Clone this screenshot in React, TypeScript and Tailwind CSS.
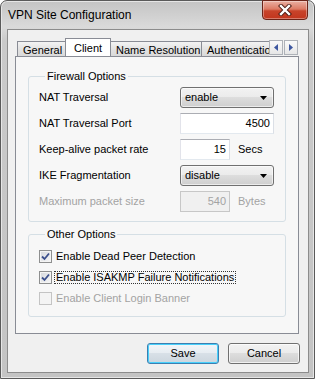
import React from 'react';

const font = "font-['Liberation_Sans',Arial,sans-serif]";

function CloseButton() {
  return (
    <div className="-mt-px mr-px flex h-[20px] w-[46px] items-center justify-center rounded-b-[4px] border border-[#6b2418] bg-[linear-gradient(180deg,#eab0a2_0%,#dc7a64_45%,#c8432a_55%,#c2351d_100%)] shadow-[inset_0_0_0_1px_rgba(255,255,255,0.35)]">
      <svg width="14" height="12" viewBox="0 0 14 12">
        <path d="M3 2 L11 10 M11 2 L3 10" stroke="#4a1a12" strokeWidth="4.2" strokeLinecap="square" />
        <path d="M3 2 L11 10 M11 2 L3 10" stroke="#ffffff" strokeWidth="2.4" strokeLinecap="square" />
      </svg>
    </div>
  );
}

function Tab({ label, width, selected }: { label: string; width: string; selected?: boolean }) {
  if (selected) {
    return (
      <div className={`relative z-10 -mb-px -ml-px flex h-[19px] shrink-0 justify-center border border-b-0 border-[#898c95] bg-white pt-[3px] text-[11px] leading-[13px] ${width}`}>
        {label}
      </div>
    );
  }
  return (
    <div className={`-ml-px flex h-[15px] shrink-0 overflow-hidden border border-b-0 border-[#898c95] bg-[linear-gradient(180deg,#f3f3f3,#e3e3e3_50%,#d9d9d9)] pl-[5px] pt-[2px] text-[11px] leading-[13px] ${width}`}>
      <span className="whitespace-nowrap">{label}</span>
    </div>
  );
}

function ScrollArrow({ dir }: { dir: 'left' | 'right' }) {
  return (
    <div className="flex h-[15px] w-[14px] items-center justify-center border border-[#aeb2b8] bg-[linear-gradient(180deg,#fafafa,#e6e6e6)]">
      <svg width="4" height="7" viewBox="0 0 4 7">
        {dir === 'left' ? <path d="M4 0 L0 3.5 L4 7 Z" fill="#3d57a0" /> : <path d="M0 0 L4 3.5 L0 7 Z" fill="#3d57a0" />}
      </svg>
    </div>
  );
}

function Select({ value }: { value: string }) {
  return (
    <div className="flex h-[21px] w-[94px] items-center justify-between rounded-[3px] border border-[#707070] bg-[linear-gradient(180deg,#f2f2f2_0%,#ebebeb_50%,#dddddd_50%,#cfcfcf_100%)] pl-[4px] pr-[6px] text-[11px] shadow-[inset_0_0_0_1px_rgba(255,255,255,0.6)]">
      <span>{value}</span>
      <svg width="7" height="4" viewBox="0 0 7 4">
        <path d="M0 0 L7 0 L3.5 4 Z" fill="#000" />
      </svg>
    </div>
  );
}

function NumberBox({ value, width, disabled }: { value: string; width: string; disabled?: boolean }) {
  return (
    <div
      className={`flex h-[21px] items-center justify-end border pr-[3px] text-[11px] ${width} ${
        disabled ? 'border-[#c7c7c7] bg-[#f0f0f0] text-[#a3a3a3]' : 'border-[#abadb3] border-b-[#e3e9ef] border-l-[#e2e3ea] border-r-[#dbdfe6] bg-white'
      }`}
    >
      {value}
    </div>
  );
}

function Row({ label, disabled, children }: { label: string; disabled?: boolean; children: React.ReactNode }) {
  return (
    <div className="flex h-[21px] items-center">
      <span className={`w-[141px] text-[11px] ${disabled ? 'text-[#a3a3a3]' : ''}`}>{label}</span>
      {children}
    </div>
  );
}

function CheckRow({ label, checked, disabled, focused }: { label: string; checked?: boolean; disabled?: boolean; focused?: boolean }) {
  return (
    <div className="flex h-[21px] items-center">
      <div
        className={`flex h-[13px] w-[13px] items-center justify-center border ${
          disabled ? 'border-[#c4c4c4] bg-[#f4f4f4]' : 'border-[#8e8f8f] bg-[linear-gradient(135deg,#d4d7dc,#f7f7f7)] shadow-[inset_0_0_0_1px_#f4f4f4]'
        }`}
      >
        {checked && (
          <svg width="9" height="9" viewBox="0 0 9 9">
            <path d="M1 4.5 L3.5 7 L8 1.5" fill="none" stroke="#3b4f8c" strokeWidth="1.8" />
          </svg>
        )}
      </div>
      <span
        className={`ml-[2px] px-px text-[11px] leading-[11px] ${disabled ? 'text-[#a3a3a3]' : ''} ${
          focused ? 'border border-dotted border-[#333]' : 'border border-transparent'
        }`}
      >
        {label}
      </span>
    </div>
  );
}

function Group({ title, className, children }: { title: string; className?: string; children: React.ReactNode }) {
  return (
    <fieldset className={`rounded-[3px] border border-[#d5dfe5] pl-[10px] ${className ?? ''}`}>
      <legend className="ml-[6px] bg-[#f7f7f7] px-[2px] text-[11px] leading-[13px]">{title}</legend>
      {children}
    </fieldset>
  );
}

export default function App() {
  return (
    <div className={`${font} h-[379px] w-[315px] select-none text-black`}>
      <div className="flex h-full flex-col rounded-t-[7px] border border-[#5a5a5a] bg-[linear-gradient(180deg,#c4c4c4_0px,#dadada_26px,#cacaca_40px,#c4c4c4_100%)] pb-[5px] pl-[6px] pr-[5px] shadow-[inset_0_0_0_1px_#e6e6e6]">
        <div className="flex h-[28px] items-start justify-between">
          <span className="mt-[6px] pl-px text-[12px] leading-[16px]">VPN Site Configuration</span>
          <CloseButton />
        </div>
        <div className="flex flex-1 flex-col border border-[#8c8c8c] bg-[#f0f0f0] pt-[8px]">
          <div className="ml-[7px] w-[284px]">
            <div className="flex h-[18px] items-end pl-[2px]">
              <div className="flex w-[252px] items-end overflow-hidden pl-px">
                <Tab label="General" width="w-[49px]" />
                <Tab label="Client" width="w-[46px]" selected />
                <Tab label="Name Resolution" width="w-[92px]" />
                <Tab label="Authentication" width="w-[80px]" />
              </div>
              <div className="mb-px flex gap-px self-end">
                <ScrollArrow dir="left" />
                <ScrollArrow dir="right" />
              </div>
            </div>
            <div className="border border-[#898c95] bg-[#f7f7f7] px-[12px] pb-[16px] pt-[13px]">
              <Group title="Firewall Options" className="pb-[9px] pt-[4px]">
                <div className="flex flex-col gap-[5px]">
                  <Row label="NAT Traversal">
                    <Select value="enable" />
                  </Row>
                  <Row label="NAT Traversal Port">
                    <NumberBox value="4500" width="w-[94px]" />
                  </Row>
                  <Row label="Keep-alive packet rate">
                    <NumberBox value="15" width="w-[50px]" />
                    <span className="ml-[8px] text-[11px]">Secs</span>
                  </Row>
                  <Row label="IKE Fragmentation">
                    <Select value="disable" />
                  </Row>
                  <Row label="Maximum packet size" disabled>
                    <NumberBox value="540" width="w-[50px]" disabled />
                    <span className="ml-[8px] text-[11px] text-[#a3a3a3]">Bytes</span>
                  </Row>
                </div>
              </Group>
              <Group title="Other Options" className="mt-[6px] pb-[7px] pt-[5px]">
                <CheckRow label="Enable Dead Peer Detection" checked />
                <CheckRow label="Enable ISAKMP Failure Notifications" checked focused />
                <CheckRow label="Enable Client Login Banner" disabled />
              </Group>
            </div>
          </div>
          <div className="mt-[9px] flex justify-end gap-[9px] pr-[8px]">
            <button className="h-[21px] w-[72px] rounded-[3px] border border-[#3c7fb1] bg-[linear-gradient(180deg,#f2f6f9_0%,#e6ecf1_50%,#d8e0e7_50%,#ccd6de_100%)] text-[11px] shadow-[inset_0_0_0_1px_#48d0fb]">
              Save
            </button>
            <button className="h-[21px] w-[72px] rounded-[3px] border border-[#707070] bg-[linear-gradient(180deg,#f2f2f2_0%,#ebebeb_50%,#dddddd_50%,#cfcfcf_100%)] text-[11px] shadow-[inset_0_0_0_1px_rgba(255,255,255,0.7)]">
              Cancel
            </button>
          </div>
        </div>
      </div>
    </div>
  );
}
